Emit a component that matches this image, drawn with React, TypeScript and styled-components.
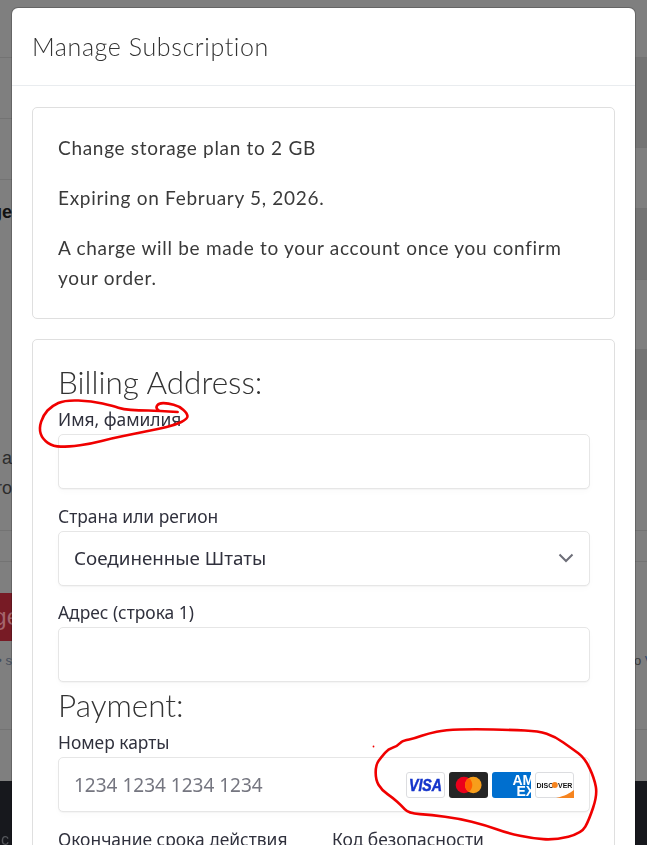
import React from "react";
import styled, { createGlobalStyle } from "styled-components";

const GlobalStyle = createGlobalStyle`
  html, body {
    margin: 0;
    height: 100%;
    overflow: hidden;
    background: #7f7f7f;
  }
  * {
    box-sizing: border-box;
  }
`;

const latin = `Lato, "Open Sans", sans-serif`;
const stripeFont = `"Noto Sans", "Open Sans", sans-serif`;

const Backdrop = styled.div`
  position: fixed;
  inset: 0;
  display: flex;
  flex-direction: column;
  background: #7f7f7f;
`;

const BackdropColumns = styled.div`
  flex: 1;
  display: flex;
  justify-content: space-between;
`;

const SidePane = styled.div`
  width: 13px;
  display: flex;
  flex-direction: column;
  overflow: hidden;
`;

const BackRow = styled.div<{ $h: number; $bg?: string; $line?: boolean; $end?: boolean }>`
  height: ${(p) => p.$h}px;
  flex: none;
  background: ${(p) => p.$bg || "transparent"};
  border-bottom: ${(p) => (p.$line ? "1px solid #737373" : "none")};
  display: flex;
  align-items: center;
  justify-content: ${(p) => (p.$end ? "flex-end" : "flex-start")};
  padding-right: ${(p) => (p.$end ? "1px" : "0")};
  white-space: nowrap;
`;

const ClipText = styled.span<{ $color: string; $bold?: boolean; $size?: number }>`
  flex: none;
  color: ${(p) => p.$color};
  font-family: "Liberation Sans", sans-serif;
  font-size: ${(p) => p.$size || 18}px;
  font-weight: ${(p) => (p.$bold ? 700 : 400)};
`;

const BannerText = styled(ClipText)`
  margin-right: -8px;
`;

const Footer = styled.div`
  height: 64px;
  flex: none;
  background: #17181d;
  padding: 50px 0 0 1px;
  font: 400 16px "Liberation Sans", sans-serif;
  color: #55575c;
`;

const Modal = styled.div`
  position: relative;
  margin: 8px 12px 0;
  width: 623px;
  background: #fff;
  border-radius: 6px;
  box-shadow: 0 0 0 1px rgba(0, 0, 0, 0.2);
`;

const ModalHeader = styled.div`
  height: 78px;
  padding: 0 20px 2px;
  display: flex;
  align-items: center;
  border-bottom: 1px solid #e9ecef;
`;

const ModalTitle = styled.h5`
  margin: 0;
  font: 300 25px ${latin};
  letter-spacing: 0.6px;
  color: #333;
`;

const ModalBody = styled.div`
  padding: 21px 20px 0;
  display: flex;
  flex-direction: column;
  gap: 20px;
`;

const Card = styled.div`
  border: 1px solid #dfdfdf;
  border-radius: 5px;
  padding: 25px 24px 25px 25px;
`;

const Para = styled.p`
  margin: 0 0 20px;
  font: 400 19px/30px ${latin};
  letter-spacing: 0.7px;
  color: #3a3a3a;
  &:last-child {
    margin-bottom: 0;
  }
`;

const SectionTitle = styled.h3`
  margin: 6px 0 8px;
  font: 300 31.5px/35px ${latin};
  color: #333;
  &:first-child {
    margin-top: 0;
  }
`;

const FieldLabel = styled.label`
  display: block;
  font: 400 17.4px/22px ${stripeFont};
  color: #30313d;
  margin-bottom: 4px;
`;

const Field = styled.div`
  margin-top: 15.5px;
  ${SectionTitle} + & {
    margin-top: 0;
  }
`;

const FieldBox = styled.div`
  height: 55px;
  border: 1px solid #e6e6e6;
  border-radius: 5px;
  background: #fff;
  box-shadow: 0 1px 1px rgba(0, 0, 0, 0.03), 0 3px 6px rgba(0, 0, 0, 0.02);
  padding: 0 15px;
  display: flex;
  align-items: center;
  justify-content: space-between;
`;

const BoxValue = styled.span`
  font: 400 18.8px ${stripeFont};
  color: #30313d;
`;

const BoxPlaceholder = styled(BoxValue)`
  font-size: 19px;
  color: #757680;
`;

const BrandRow = styled.div`
  display: flex;
  gap: 4px;
`;

const TwoCols = styled.div`
  display: flex;
  margin-top: 16px;
`;

const HalfLabel = styled(FieldLabel)`
  flex: none;
  width: 274px;
  margin-bottom: 0;
`;

const Overlay = styled.svg`
  position: fixed;
  inset: 0;
  width: 647px;
  height: 845px;
  pointer-events: none;
`;

const smooth = (pts: number[][]) => {
  let d = `M${pts[0][0]} ${pts[0][1]}`;
  for (let i = 1; i < pts.length - 1; i++) {
    const mx = (pts[i][0] + pts[i + 1][0]) / 2;
    const my = (pts[i][1] + pts[i + 1][1]) / 2;
    d += ` Q${pts[i][0]} ${pts[i][1]} ${mx} ${my}`;
  }
  const last = pts[pts.length - 1];
  return d + ` L${last[0]} ${last[1]}`;
};

const nameZoom = [
  [458, 51], [400, 47], [340, 46], [295, 43], [265, 33], [200, 18], [120, 15], [80, 33], [55, 60],
  [42, 100], [52, 132], [85, 155], [130, 155], [200, 146], [260, 130], [330, 116], [400, 102],
  [450, 90], [488, 72], [487, 55], [462, 33], [430, 25], [402, 24], [392, 38], [402, 47],
];
const cardZoom = [
  [108, 52], [95, 65], [70, 72], [50, 95], [32, 120], [32, 165], [50, 195], [85, 220], [108, 240],
  [130, 265], [200, 270], [280, 280], [360, 300], [430, 325], [500, 340], [570, 345], [650, 325],
  [672, 285], [697, 210], [688, 160], [660, 100], [620, 70], [570, 35], [520, 18], [440, 15],
  [330, 12], [240, 15], [190, 25], [150, 40], [115, 47], [108, 52],
];
const toPage = (pts: number[][], x: number, y: number) => pts.map(([a, b]) => [x + a / 3, y + b / 3]);

const VisaLogo = () => (
  <svg width="39" height="26" viewBox="0 0 39 26">
    <rect x="0.5" y="0.5" width="38" height="25" rx="2.5" fill="#fff" stroke="#dcdde0" />
    <text
      x="3"
      y="18.5"
      textLength="33"
      lengthAdjust="spacingAndGlyphs"
      fontFamily="Liberation Sans"
      fontWeight="700"
      fontStyle="italic"
      fontSize="16"
      fill="#1434cb"
      stroke="#1434cb"
      strokeWidth="0.5"
    >
      VISA
    </text>
  </svg>
);

const MastercardLogo = () => (
  <svg width="39" height="26" viewBox="0 0 39 26">
    <rect width="39" height="26" rx="3" fill="#252525" />
    <circle cx="15" cy="13" r="8.3" fill="#eb001b" />
    <circle cx="24.3" cy="13" r="8.3" fill="#f79e1b" />
    <path d="M19.65 6.12A8.3 8.3 0 0 1 19.65 19.88A8.3 8.3 0 0 1 19.65 6.12z" fill="#ff5f00" />
  </svg>
);

const AmexLogo = () => (
  <svg width="39" height="26" viewBox="0 0 39 26">
    <defs>
      <clipPath id="amexClip">
        <path d="M3 0H39V26H3a3 3 0 0 1-3-3V3a3 3 0 0 1 3-3z" />
      </clipPath>
    </defs>
    <g clipPath="url(#amexClip)">
      <rect width="39" height="26" fill="#006fcf" />
      <text x="20.5" y="13" fontFamily="Liberation Sans" fontWeight="700" fontSize="14" fill="#fff">AM</text>
      <text x="24.5" y="23.5" fontFamily="Liberation Sans" fontWeight="700" fontSize="14" fill="#fff">EX</text>
    </g>
  </svg>
);

const DiscoverLogo = () => (
  <svg width="39" height="26" viewBox="0 0 39 26">
    <rect x="0.5" y="0.5" width="38" height="25" rx="2.5" fill="#fff" stroke="#dcdde0" />
    <path d="M21 26C30 24 35 21 39 18V26z" fill="#f6841f" />
    <text x="1.5" y="15.5" fontFamily="Liberation Sans" fontWeight="700" fontSize="7" fill="#111">DISC</text>
    <circle cx="19.8" cy="13" r="3" fill="#f6841f" />
    <text x="23" y="15.5" fontFamily="Liberation Sans" fontWeight="700" fontSize="7" fill="#111">VER</text>
  </svg>
);

const Chevron = () => (
  <svg width="16" height="10" viewBox="0 0 16 10">
    <path d="M1.5 1.5L8 8l6.5-6.5" fill="none" stroke="#6d6e78" strokeWidth="2" />
  </svg>
);

const App = () => {
  return (
    <>
      <GlobalStyle />
      <Backdrop>
        <BackdropColumns>
          <SidePane>
            <BackRow $h={58} $line />
            <BackRow $h={61} $line />
            <BackRow $h={61} $line />
            <BackRow $h={65} $end>
              <ClipText $color="#111" $bold>ge</ClipText>
            </BackRow>
            <BackRow $h={198} />
            <BackRow $h={30} $end>
              <ClipText $color="#2c2c2c">a</ClipText>
            </BackRow>
            <BackRow $h={30} $end>
              <ClipText $color="#2c2c2c">ro</ClipText>
            </BackRow>
            <BackRow $h={28} $line />
            <BackRow $h={31} $line />
            <BackRow $h={31} />
            <BackRow $h={48} $bg="#771b25" $end>
              <BannerText $color="#a4666d" $size={24}>ge</BannerText>
            </BackRow>
            <BackRow $h={38} $end>
              <ClipText $color="#464f5e" $size={13}>&bull; s</ClipText>
            </BackRow>
            <BackRow $h={51} $line />
          </SidePane>
          <SidePane>
            <BackRow $h={58} $line />
            <BackRow $h={90} $bg="#747474" $line />
            <BackRow $h={61} $line />
            <BackRow $h={71} $bg="#747474" $line />
            <BackRow $h={70} $line />
            <BackRow $h={70} $bg="#747474" />
            <BackRow $h={111} $line />
            <BackRow $h={31} $line />
            <BackRow $h={80} />
            <BackRow $h={36}>
              <ClipText $color="#3c3c3c" $size={13}>
                o <ClipText $color="#2f4a6e" $size={13}>V</ClipText>
              </ClipText>
            </BackRow>
            <BackRow $h={52} $line />
          </SidePane>
        </BackdropColumns>
        <Footer>c</Footer>
      </Backdrop>

      <Modal>
        <ModalHeader>
          <ModalTitle>Manage Subscription</ModalTitle>
        </ModalHeader>
        <ModalBody>
          <Card>
            <Para>Change storage plan to 2 GB</Para>
            <Para>Expiring on February 5, 2026.</Para>
            <Para>A charge will be made to your account once you confirm your order.</Para>
          </Card>
          <Card>
            <SectionTitle>Billing Address:</SectionTitle>
            <Field>
              <FieldLabel>Имя, фамилия</FieldLabel>
              <FieldBox />
            </Field>
            <Field>
              <FieldLabel>Страна или регион</FieldLabel>
              <FieldBox>
                <BoxValue>Соединенные Штаты</BoxValue>
                <Chevron />
              </FieldBox>
            </Field>
            <Field>
              <FieldLabel>Адрес (строка 1)</FieldLabel>
              <FieldBox />
            </Field>
            <SectionTitle>Payment:</SectionTitle>
            <Field>
              <FieldLabel>Номер карты</FieldLabel>
              <FieldBox>
                <BoxPlaceholder>1234 1234 1234 1234</BoxPlaceholder>
                <BrandRow>
                  <VisaLogo />
                  <MastercardLogo />
                  <AmexLogo />
                  <DiscoverLogo />
                </BrandRow>
              </FieldBox>
            </Field>
            <TwoCols>
              <HalfLabel>Окончание срока действия</HalfLabel>
              <HalfLabel>Код безопасности</HalfLabel>
            </TwoCols>
          </Card>
        </ModalBody>
      </Modal>

      <Overlay viewBox="0 0 647 845">
        <g fill="none" stroke="#f00000" strokeWidth="2.6" strokeLinecap="round" strokeLinejoin="round">
          <path d={smooth(toPage(nameZoom, 25, 395))} />
          <path d={smooth(toPage(cardZoom, 365, 725))} />
        </g>
        <circle cx="373.5" cy="746.5" r="0.9" fill="#f00000" />
      </Overlay>
    </>
  );
};

export default App;
